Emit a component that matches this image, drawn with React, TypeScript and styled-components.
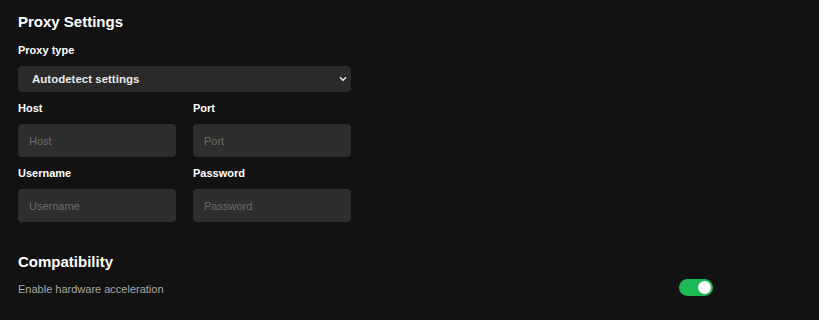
import * as React from 'react'
import styled, { createGlobalStyle } from 'styled-components'

const GlobalStyle = createGlobalStyle`
  html, body {
    margin: 0;
    background: #121212;
    font-family: 'Liberation Sans', Arial, sans-serif;
    color: #fff;
  }
`

const Page = styled.div`
  width: 819px;
  height: 320px;
  padding: 13px 18px 0;
  box-sizing: border-box;
  background: #121212;
  overflow: hidden;
`

const Section = styled.section<{ $top?: number; $gap?: number }>`
  display: flex;
  flex-direction: column;
  margin-top: ${p => p.$top ?? 0}px;
  gap: ${p => p.$gap ?? 0}px;
`

const Heading = styled.h2`
  margin: 0;
  font-size: 15px;
  font-weight: 700;
  line-height: 18px;
  color: #fff;
`

const Field = styled.div<{ $top?: number }>`
  display: flex;
  flex-direction: column;
  gap: 9px;
  margin-top: ${p => p.$top ?? 0}px;
`

const Label = styled.label`
  font-size: 11px;
  font-weight: 700;
  line-height: 14px;
  color: #fff;
`

const SelectBox = styled.div`
  position: relative;
  width: 333px;
  height: 26px;
  border-radius: 4px;
  background: #2a2a2a;
  display: flex;
  align-items: center;
  padding: 0 14px;
  box-sizing: border-box;
  font-size: 11.5px;
  font-weight: 700;
  color: #e8e8e8;
`

const Chevron = styled.svg`
  position: absolute;
  right: 4px;
  top: 10px;
`

const Grid = styled.div<{ $top: number }>`
  display: grid;
  grid-template-columns: 158px 158px;
  column-gap: 17px;
  width: 333px;
  margin-top: ${p => p.$top}px;
`

const TextInput = styled.input`
  width: 158px;
  height: 33px;
  border: none;
  border-radius: 4px;
  background: #2e2e2e;
  padding: 0 11px;
  box-sizing: border-box;
  font-family: 'Liberation Sans', Arial, sans-serif;
  font-size: 11px;
  color: #fff;
  outline: none;
  &::placeholder {
    color: #6b6b6b;
  }
`

const SettingRow = styled.div`
  display: flex;
  align-items: center;
  justify-content: space-between;
  width: 695px;
`

const RowText = styled.span`
  font-size: 11px;
  color: #a7a7a7;
`

const Toggle = styled.div<{ $on: boolean }>`
  position: relative;
  width: 34px;
  height: 17px;
  margin-top: -2px;
  border-radius: 9px;
  background: ${p => (p.$on ? '#1db954' : '#727272')};
`

const Knob = styled.div<{ $on: boolean }>`
  position: absolute;
  top: 2px;
  left: ${p => (p.$on ? '19px' : '2px')};
  width: 13px;
  height: 13px;
  border-radius: 50%;
  background: #fff;
`

export default function App() {
  return (
    <>
      <GlobalStyle />
      <Page>
        <Section>
          <Heading>Proxy Settings</Heading>
          <Field $top={12}>
            <Label>Proxy type</Label>
            <SelectBox>
              Autodetect settings
              <Chevron width="8" height="6" viewBox="0 0 8 6">
                <path d="M1 1.2L4 4.2L7 1.2" stroke="#e8e8e8" strokeWidth="1.6" fill="none" />
              </Chevron>
            </SelectBox>
          </Field>
          <Grid $top={9}>
            <Field>
              <Label>Host</Label>
              <TextInput placeholder="Host" />
            </Field>
            <Field>
              <Label>Port</Label>
              <TextInput placeholder="Port" />
            </Field>
          </Grid>
          <Grid $top={9}>
            <Field>
              <Label>Username</Label>
              <TextInput placeholder="Username" />
            </Field>
            <Field>
              <Label>Password</Label>
              <TextInput placeholder="Password" />
            </Field>
          </Grid>
        </Section>
        <Section $top={31} $gap={10}>
          <Heading>Compatibility</Heading>
          <SettingRow>
            <RowText>Enable hardware acceleration</RowText>
            <Toggle $on>
              <Knob $on />
            </Toggle>
          </SettingRow>
        </Section>
      </Page>
    </>
  )
}
